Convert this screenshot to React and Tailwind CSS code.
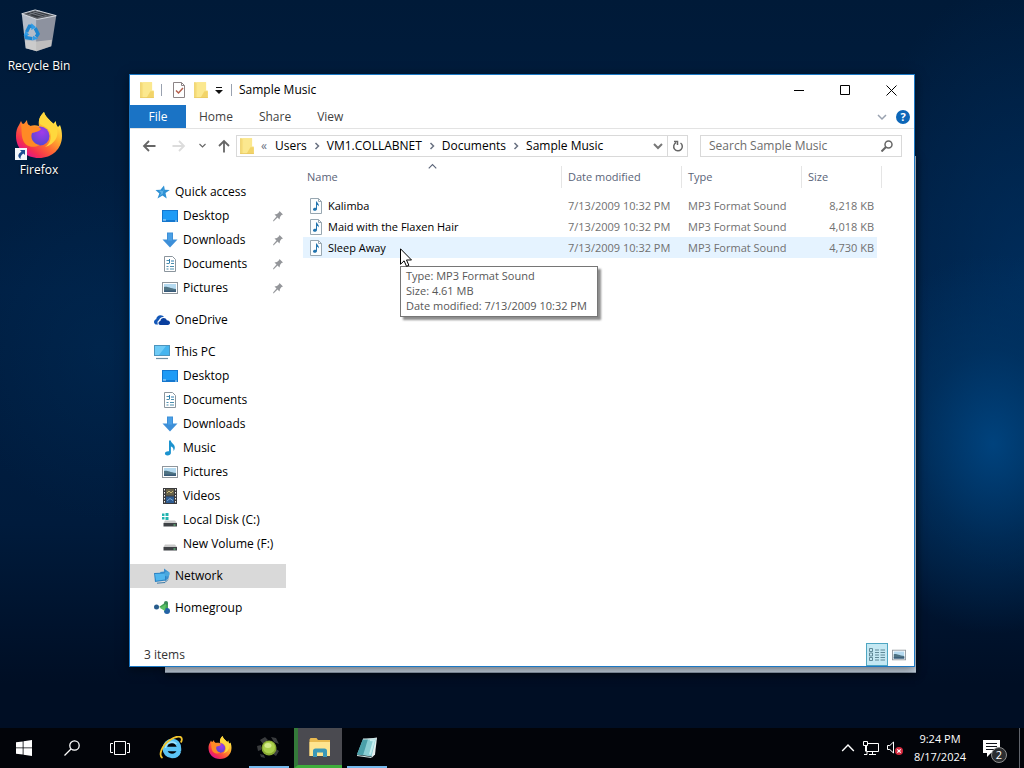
import React, { useId } from 'react';

const FolderIcon = ({ className = 'w-4 h-4' }) => (
    <svg className={className} viewBox="0 0 16 16" aria-hidden="true">
        <path d="M2 1h10.500v7.500H14V15H2z" fill="#f8e07f"/>
        <path d="M4.500 1h8v8l-2 5.500h-6z" fill="#fbe88f"/>
        <path d="M11 9h3v6H7.500z" fill="#f2d469"/>
        <path d="M2.500 1v14" stroke="#ecd06a"/>
        <path d="M2 14.700h12" stroke="#e6c75f" strokeWidth=".6"/>
    </svg>
);

const PropertiesIcon = () => (
    <svg className="w-4 h-4" viewBox="0 0 16 16" fill="none" aria-hidden="true">
        <path d="M2.500.5h8l3 3v12h-11z" fill="#fff" stroke="#8c8486"/>
        <path d="M10.500.5v3h3" stroke="#8c8486"/>
        <path d="M5 8.500l2.500 2.500L12 6" stroke="#b5604d" strokeWidth="1.500"/>
    </svg>
);

const DesktopIcon = () => (
    <svg className="w-4 h-4" viewBox="0 0 16 16" aria-hidden="true">
        <rect x="0" y="2" width="16" height="12" fill="#1377cf"/>
        <rect x="1" y="3" width="14" height="9" fill="#1e9bf6"/>
        <path d="M1 12h3M13 13h2" stroke="#bfe2fb"/>
    </svg>
);

const DownloadIcon = () => (
    <svg className="w-4 h-4" viewBox="0 0 16 16" aria-hidden="true">
        <path d="M5 .5h6v7h4.500L8 15.500.5 7.500H5z" fill="#3d8fd8"/>
        <path d="M6 1.500h4v7H6z" fill="#4ba0e6"/>
    </svg>
);

const DocumentIcon = () => (
    <svg className="w-4 h-4" viewBox="0 0 16 16" fill="none" aria-hidden="true">
        <path d="M2.500.5h8l3 3v12h-11z" fill="#fff" stroke="#8b959d"/>
        <path d="M4.500 4.500h3M4.500 7.500h3M9 7.500h3M4.500 10.500h2M8 10.500h4M4.500 13h2M8 13h4" stroke="#4d8fae"/>
        <path d="M7.500 3v4M9 5h3" stroke="#2c7cae"/>
    </svg>
);

const PictureIcon = ({ className = 'w-4 h-4' }) => (
    <svg className={className} viewBox="0 0 16 16" aria-hidden="true">
        <rect x=".5" y="2.500" width="15" height="11" fill="#fff" stroke="#8f969c"/>
        <rect x="2" y="4" width="12" height="8" fill="#b5daf0"/>
        <path d="M2 7c3-1 5 1 12 2v3H2z" fill="#4f7383"/>
        <path d="M2 10.500h12V12H2z" fill="#385a78"/>
    </svg>
);

const StarIcon = () => (
    <svg className="w-4 h-4" viewBox="0 0 16 16" aria-hidden="true">
        <path d="M10 1.500l.8 4.200 5 .3-4.300 3 1.200 5.500L8.500 11.500 3.500 14.500l1.800-5L1.500 6l5-.2z" fill="#2f91d4"/>
        <path d="M9.500 3.500l.2 3.500-5-.4 2.500 2.400L5.500 12 9 9.500z" fill="#5fb2e8"/>
    </svg>
);

const OneDriveIcon = () => (
    <svg className="w-4 h-4" viewBox="0 0 16 16" aria-hidden="true">
        <path d="M4 12.500H2.800C1 12.500 0 11.300 0 9.900 0 8.600 1 7.500 2.200 7.300 2.300 5 4.200 3.200 6.500 3.200c1.700 0 3 .8 3.700 2-2.800-.5-4.700 1-5.200 3-1.700.4-2 2.700-1 4.300z" fill="#1458b8"/>
        <path d="M6.300 13C5 13 4.500 12 4.500 11c0-1.200.8-2 1.900-2.100C6.500 7.200 8 6 9.600 6c1.500 0 2.700.8 3.200 2.200 1.800 0 3.200 1 3.200 2.600 0 1.300-.9 2.200-2.200 2.200z" fill="#0a3f9e"/>
    </svg>
);

const ComputerIcon = () => (
    <svg className="w-4 h-4" viewBox="0 0 16 16" aria-hidden="true">
        <rect x="0" y="1" width="16" height="11" fill="#4c94bd"/>
        <rect x="1" y="2" width="14" height="9" fill="#45b5ef"/>
        <path d="M1 2h11L5 11H1z" fill="#6fcbf6"/>
        <path d="M2 14.500h12" stroke="#6d8fa3" strokeWidth="1.200"/>
    </svg>
);

const MusicIcon = () => (
    <svg className="w-4 h-4" viewBox="0 0 16 16" aria-hidden="true">
        <path d="M7 .5h1.800c.2 2.500 4 3.500 4 7 0 1.500-.5 2.500-1.300 3.500.3-2.500-.8-4-2.600-4.500V13c0 1.500-1.500 2.500-3.300 2.500S2.500 14.500 3 13c.4-1.300 2.300-2.200 4-1.700z" fill="#1c93cf"/>
    </svg>
);

const VideoIcon = () => (
    <svg className="w-4 h-4" viewBox="0 0 16 16" aria-hidden="true">
        <rect x="1" y="0" width="14" height="16" fill="#3a3a3c"/>
        <rect x="4" y="1" width="8" height="6.500" fill="#67624a"/>
        <rect x="4" y="8.500" width="8" height="6.500" fill="#2f5c91"/>
        <path d="M5 5l2-2 2 2 2-2" stroke="#c9b878" fill="none"/>
        <path d="M5 13l3-2.500 3 2" stroke="#7fa9cf" fill="none"/>
        <path d="M2.500 1v15M13.500 1v15" stroke="#f3f3f3" strokeDasharray="1.500 1.500"/>
    </svg>
);

const DriveIcon = ({ system }) => (
    <svg className="w-4 h-4" viewBox="0 0 16 16" aria-hidden="true">
        <path d="M3 8.500h10l2 2.500H1.500z" fill="#c9c9c9"/>
        <rect x="1.500" y="11" width="13.500" height="3.500" fill="#3f4246"/>
        <path d="M11.500 13h2" stroke="#6fe08c"/>
        {system && <path d="M0 1.500h2.500V4H0zM3.500 1h3v3h-3zM0 5h2.500v2.500H0zM3.500 5h3v3h-3z" fill="#22b3b0"/>}
    </svg>
);

const NetworkIcon = () => (
    <svg className="w-4 h-4" viewBox="0 0 16 16" aria-hidden="true">
        <path d="M6 4l4-.5V.5l5.500 4-1 6L11 13z" fill="#3c8fcd"/>
        <path d="M0 5l12-.5v8L1 14z" fill="#2b83c4"/>
        <path d="M1 6l10-.5v6L2 12.800z" fill="#50b6ee"/>
        <path d="M3 15.200l8-.7 3-3" stroke="#3d7ba8" fill="none"/>
        <circle cx="13" cy="6" r="2.500" fill="#4aa7dd"/>
    </svg>
);

const HomegroupIcon = () => (
    <svg className="w-4 h-4" viewBox="0 0 16 16" aria-hidden="true">
        <path d="M5 7l7-5 2 1v8z" fill="#42a455"/>
        <circle cx="2.500" cy="7" r="2.500" fill="#285c8d"/>
        <circle cx="12" cy="3" r="2" fill="#3a8a58"/>
        <circle cx="13" cy="11" r="3" fill="#2463a5"/>
        <path d="M6 8l6-4-1 7z" fill="#5fc468"/>
    </svg>
);

const SoundFileIcon = () => (
    <svg className="w-4 h-4 shrink-0" viewBox="0 0 16 16" aria-hidden="true">
        <path d="M2.500.5h8l3 3v12h-11z" fill="#fbfdfe" stroke="#98a7b1"/>
        <path d="M10.500.5v3h3" fill="none" stroke="#98a7b1"/>
        <path d="M8 3.500h1c0 1.500 2.200 2 2 5-.5-1-1.200-1.500-2-1.500v4c0 1-1 1.800-2.200 1.800s-2-.8-1.800-1.600c.2-1 1.600-1.700 3-1.300z" fill="#2374ae"/>
    </svg>
);

const PinIcon = () => (
    <svg className="w-3 h-3" viewBox="0 0 12 12" aria-hidden="true">
        <path d="M7.500 1L11 4.500 9.500 5 8 7l-.5 2.500-2-2L2 11l-1 .5.300-1.300L4.500 6.500l-2-2L5 4l2-1.800z" fill="#94969a"/>
    </svg>
);

const Chevron = ({ d, className = 'w-3 h-3', width = 1.5 }) => (
    <svg className={className} viewBox="0 0 12 12" fill="none" stroke="currentColor" strokeWidth={width} aria-hidden="true">
        <path d={d}/>
    </svg>
);

const DOWN = 'M2 4l4 4 4-4';
const RIGHT = 'M4.500 3l3 3-3 3';
const UP = 'M1 8.500L6 3.500l5 5';

const FirefoxIcon = ({ className }) => {
    const id = useId();
    return (
        <svg className={className} viewBox="0 0 48 48" aria-hidden="true">
            <defs>
                <linearGradient id={`${id}body`} x1="0.850" y1="0.100" x2="0.200" y2="0.900">
                    <stop offset="0" stopColor="#fff44f"/>
                    <stop offset="0.350" stopColor="#ffb02e"/>
                    <stop offset="0.600" stopColor="#ff6a33"/>
                    <stop offset="0.850" stopColor="#f5304f"/>
                    <stop offset="1" stopColor="#e31587"/>
                </linearGradient>
                <radialGradient id={`${id}globe`} cx="0.600" cy="0.300" r="0.800">
                    <stop offset="0" stopColor="#a23bea"/>
                    <stop offset="1" stopColor="#4f48d0"/>
                </radialGradient>
            </defs>
            <path d="M29 0c1 5 6 8 9 12l3-3c-.2 3 .7 4 2 6l2-2c1.500 4 2 7 2 11 0 13-10 22-23 22S1 37 1 24c0-5 1-8 3-11l2-4 2 4 4-5c0 3 1 5 3 6 3-1 6-1 9 0-1-6 1-10 5-14z" fill={`url(#${id}body)`}/>
            <circle cx="25" cy="24" r="9.500" fill={`url(#${id}globe)`}/>
            <path d="M29 0c-4 4-6 8-4 12 3 2 8 3 10 8 2 6 0 12-5 15 10-3 14-11 12-18-2-6-11-10-13-17z" fill="#ffd83d"/>
            <path d="M6 12c4-1 8 1 11 3 4-1 7-1 9 2-2 3-6 3-9 4-2 5 1 11 8 12-8 4-15 1-17-5-2-5-1-11-2-16z" fill="#ff8a25"/>
        </svg>
    );
};

const RecycleBinIcon = ({ className }) => (
    <svg className={className} viewBox="4 0 48 48" aria-hidden="true">
        <path d="M10 6l17 3-1 36-12-3z" fill="#b4bcc8"/>
        <path d="M25 9l21-1-5 32-16 5z" fill="#8d929f"/>
        <path d="M10 6l14-4 22 6-20 4z" fill="#5d6168"/>
        <path d="M15 6l9-3 15 4-13 3z" fill="#34383e"/>
        <path d="M18 5l14 4M22 4l14 4M17 7l12-4" stroke="#777c85"/>
        <path d="M10 6l14-4 22 6-20 4z" fill="none" stroke="#d8dde3"/>
        <path d="M13.500 34l12 1v10l-11-3zM25.500 35l16-2-1 7-15 5z" fill="#d4d1cc" opacity=".7"/>
        <g fill="none" stroke="#1e86d0" strokeWidth="3.500">
            <path d="M15 25l3-6 3 0"/>
            <path d="M24 21l3 6-2 3"/>
            <path d="M21 32l-6-1-1-3"/>
        </g>
        <path d="M20 16l5 4-5 3zM27 32l-6 2 1-5zM12 29l2-5 4 4z" fill="#2f9be6"/>
    </svg>
);

const quickAccess = [
    { name: 'Desktop', Icon: DesktopIcon },
    { name: 'Downloads', Icon: DownloadIcon },
    { name: 'Documents', Icon: DocumentIcon },
    { name: 'Pictures', Icon: PictureIcon },
];

const thisPc = [
    { name: 'Desktop', Icon: DesktopIcon },
    { name: 'Documents', Icon: DocumentIcon },
    { name: 'Downloads', Icon: DownloadIcon },
    { name: 'Music', Icon: MusicIcon },
    { name: 'Pictures', Icon: PictureIcon },
    { name: 'Videos', Icon: VideoIcon },
    { name: 'Local Disk (C:)', Icon: () => <DriveIcon system/> },
    { name: 'New Volume (F:)', Icon: DriveIcon },
];

const files = [
    { name: 'Kalimba', size: '8,218 KB' },
    { name: 'Maid with the Flaxen Hair', size: '4,018 KB' },
    { name: 'Sleep Away', size: '4,730 KB', hovered: true },
];

const NavItem = ({ name, Icon, child, pinned, selected }) => (
    <li>
        <a href="#" className={`flex items-center h-6 gap-[5px] ${child ? 'pl-8' : 'pl-6'} ${selected ? 'bg-[#d9d9d9]' : ''}`}>
            <Icon/>
            <span className="flex-1 whitespace-nowrap">{name}</span>
            {pinned && <span className="pr-[2px]"><PinIcon/></span>}
        </a>
    </li>
);

const Sidebar = () => (
    <nav className="w-[156px] shrink-0 pt-[18px] space-y-2 text-black">
        <ul>
            <NavItem name="Quick access" Icon={StarIcon}/>
            {quickAccess.map((item) => <NavItem key={item.name} {...item} child pinned/>)}
        </ul>
        <ul><NavItem name="OneDrive" Icon={OneDriveIcon}/></ul>
        <ul>
            <NavItem name="This PC" Icon={ComputerIcon}/>
            {thisPc.map((item) => <NavItem key={item.name} {...item} child/>)}
        </ul>
        <ul><NavItem name="Network" Icon={NetworkIcon} selected/></ul>
        <ul><NavItem name="Homegroup" Icon={HomegroupIcon}/></ul>
    </nav>
);

const TitleBar = () => (
    <div className="flex items-center h-[30px] shrink-0">
        <div className="flex items-center pl-2 text-black">
            <FolderIcon className="w-[18px] h-[18px]"/>
            <span className="w-px h-3 bg-gray-400 ml-[5px] mr-[9px]"/>
            <button aria-label="Properties"><PropertiesIcon/></button>
            <button aria-label="New folder" className="ml-[5px]"><FolderIcon className="w-[18px] h-[18px]"/></button>
            <button aria-label="Customize" className="ml-[5px]">
                <svg className="w-2 h-2" viewBox="0 0 8 8"><path d="M1 1.500h6" stroke="#111"/><path d="M0 4h8L4 8z" fill="#111"/></svg>
            </button>
            <span className="w-px h-3 bg-gray-400 ml-2 mr-[7px]"/>
            <h1>Sample Music</h1>
        </div>
        <div className="flex ml-auto text-black">
            <button aria-label="Minimize" className="w-[46px] h-[29px] flex items-center justify-center">
                <svg className="w-[10px] h-[10px]" viewBox="0 0 10 10"><path d="M0 5.500h10" stroke="currentColor"/></svg>
            </button>
            <button aria-label="Maximize" className="w-[46px] h-[29px] flex items-center justify-center">
                <svg className="w-[10px] h-[10px]" viewBox="0 0 10 10"><path d="M.5.5h9v9h-9z" fill="none" stroke="currentColor"/></svg>
            </button>
            <button aria-label="Close" className="w-[46px] h-[29px] flex items-center justify-center">
                <svg className="w-[11px] h-[11px]" viewBox="0 0 11 11"><path d="M.5.5l10 10M10.500.5l-10 10" stroke="currentColor"/></svg>
            </button>
        </div>
    </div>
);

const Ribbon = () => (
    <div className="flex items-center h-6 shrink-0 border-b border-[#e3e3e3] text-[#3f3f3f]">
        <button className="w-14 h-full bg-[#1a73c5] text-white">File</button>
        <button className="px-[13px]">Home</button>
        <button className="px-[13px]">Share</button>
        <button className="px-[13px]">View</button>
        <div className="flex items-center gap-2 ml-auto pr-1">
            <button aria-label="Expand ribbon" className="text-gray-400"><Chevron d={DOWN}/></button>
            <button className="w-[14px] h-[14px] rounded-full bg-[#0c66b8] text-white text-[11px] leading-[14px] font-bold">?</button>
        </div>
    </div>
);

const Crumb = ({ children, last }) => (
    <>
        <a href="#" className="whitespace-nowrap">{children}</a>
        {!last && <Chevron d={RIGHT} className="w-3 h-3 mx-1 text-gray-500"/>}
    </>
);

const AddressBar = () => (
    <div className="flex items-center h-[33px] shrink-0 pr-3">
        <div className="flex items-center w-[106px] shrink-0 text-[#666]">
            <button aria-label="Back" className="ml-3">
                <svg className="w-[14px] h-[14px]" viewBox="0 0 14 14" fill="none" stroke="currentColor" strokeWidth="1.800"><path d="M13.500 7H2M7 2L2 7l5 5"/></svg>
            </button>
            <button aria-label="Forward" className="ml-4 text-[#dcdcdc]">
                <svg className="w-[14px] h-[14px]" viewBox="0 0 14 14" fill="none" stroke="currentColor" strokeWidth="1.800"><path d="M.5 7H12M7 2l5 5-5 5"/></svg>
            </button>
            <button aria-label="Recent" className="ml-3"><Chevron d={DOWN} className="w-[9px] h-[9px]"/></button>
            <button aria-label="Up" className="ml-[10px]">
                <svg className="w-[14px] h-[14px]" viewBox="0 0 14 14" fill="none" stroke="currentColor" strokeWidth="1.800"><path d="M7 13.500V2M2 7l5-5 5 5"/></svg>
            </button>
        </div>
        <nav className="flex items-center flex-1 min-w-0 h-[22px] border border-[#d9d9d9] text-black">
            <FolderIcon className="w-[18px] h-[18px] ml-px"/>
            <span className="text-gray-500 ml-[5px] mr-2">«</span>
            <Crumb>Users</Crumb>
            <Crumb>VM1.COLLABNET</Crumb>
            <Crumb>Documents</Crumb>
            <Crumb last>Sample Music</Crumb>
            <button aria-label="Previous locations" className="ml-auto mr-[3px] text-[#777]"><Chevron d={DOWN} width={2}/></button>
            <button aria-label="Refresh" className="flex items-center justify-center w-5 h-full border-l border-[#d9d9d9] text-[#666]">
                <svg className="w-3 h-3" viewBox="0 0 12 12" fill="none" stroke="currentColor" strokeWidth="1.500">
                    <path d="M8.500 3A4.300 4.300 0 1 1 4 2.700M2 1.500h3.500V5"/>
                </svg>
            </button>
        </nav>
        <label className="flex items-center w-[202px] h-[22px] ml-3 px-2 border border-[#d9d9d9]">
            <input type="text" aria-label="Search Sample Music" placeholder="Search Sample Music"
                   className="flex-1 min-w-0 outline-none placeholder:text-[#6d6d6d]"/>
            <svg className="w-3 h-3 text-[#666]" viewBox="0 0 12 12" fill="none" stroke="currentColor" strokeWidth="1.500">
                <circle cx="7.500" cy="4.500" r="3.500"/>
                <path d="M5 7L.5 11.500" strokeWidth="2"/>
            </svg>
        </label>
    </div>
);

const HeaderCell = ({ children, className, first, sorted }) => (
    <th className={`relative h-[33px] p-0 align-top font-normal ${className}`}>
        {sorted && <Chevron d={UP} width={1.5} className="absolute top-0 left-1/2 w-[9px] h-[9px] -ml-1"/>}
        <div className={`mt-1 h-[22px] leading-[22px] ${first ? 'pl-1' : 'border-l border-[#e5e5e5] pl-[6px]'}`}>
            {children}
        </div>
    </th>
);

const FileTable = () => (
    <table className="ml-[17px] self-start table-fixed w-[579px] border-collapse text-left text-[11px] text-[#707070]">
        <thead className="text-[#5a6478]">
            <tr>
                <HeaderCell className="w-[258px]" first sorted>Name</HeaderCell>
                <HeaderCell className="w-[120px]">Date modified</HeaderCell>
                <HeaderCell className="w-[120px]">Type</HeaderCell>
                <HeaderCell className="w-[76px]">Size</HeaderCell>
                <td className="align-top p-0"><div className="mt-1 h-[22px] border-r border-[#e5e5e5]"/></td>
            </tr>
        </thead>
        <tbody>
            {files.map((file) => {
                const bg = file.hovered ? 'bg-[#e5f3ff]' : '';
                return (
                    <tr key={file.name} className="h-[21px] whitespace-nowrap">
                        <td className={`p-0 pl-[5px] text-black ${bg}`}>
                            <span className="flex items-center gap-1"><SoundFileIcon/>{file.name}</span>
                        </td>
                        <td className={`p-0 pl-[7px] ${bg}`}>7/13/2009 10:32 PM</td>
                        <td className={`p-0 pl-[7px] ${bg}`}>MP3 Format Sound</td>
                        <td className={`p-0 pr-[3px] text-right ${bg}`}>{file.size}</td>
                        <td className="p-0"/>
                    </tr>
                );
            })}
        </tbody>
    </table>
);

const StatusBar = () => (
    <div className="flex items-center h-[23px] shrink-0 pl-[14px] pr-1 text-[#333]">
        <span>3 items</span>
        <button aria-label="Details view" className="flex items-center justify-center ml-auto w-[22px] h-[23px] bg-[#c4e8f3] border border-[#4fa6c2]">
            <svg className="w-4 h-[14px]" viewBox="0 0 16 14" fill="none" stroke="#567e8c">
                <path d="M.5.5h3v3h-3zM.5 5h3v3h-3zM.5 9.500h3v3h-3zM6 2h4M11.500 2H16M6 4.500h4M11.500 4.500H16M6 7h4M11.500 7H16M6 9.500h4M11.500 9.500H16M6 12h4M11.500 12H16" strokeWidth=".9"/>
            </svg>
        </button>
        <button aria-label="Large icons view" className="flex items-center justify-center w-[22px]">
            <PictureIcon className="w-[14px] h-[14px]"/>
        </button>
    </div>
);

const ExplorerWindow = () => (
    <main className="absolute left-[129px] right-[109px] top-[74px] bottom-[61px] flex flex-col bg-white border border-[#1b78c4] shadow-[0_2px_10px_rgba(0,0,0,0.5)]">
        <TitleBar/>
        <Ribbon/>
        <AddressBar/>
        <div className="flex flex-1 min-h-0">
            <Sidebar/>
            <FileTable/>
        </div>
        <StatusBar/>
        <svg className="absolute left-[270px] top-[173px] w-3 h-[19px] z-10" viewBox="0 0 12 19" aria-hidden="true">
            <path d="M.5.800v15.500l3.600-3.500 2.400 5.500 2.400-1-2.400-5.300h5z" fill="#fff" stroke="#000"/>
        </svg>
        <div role="tooltip" className="absolute left-[270px] top-[191px] border border-[#767676] bg-white pl-[5px] pr-[10px] pt-px pb-[3px] text-[11px] leading-[15px] whitespace-nowrap text-[#575757] shadow-[3px_3px_2px_rgba(0,0,0,0.45)]">
            <p>Type: MP3 Format Sound</p>
            <p>Size: 4.61 MB</p>
            <p>Date modified: 7/13/2009 10:32 PM</p>
        </div>
    </main>
);

const DesktopShortcut = ({ name, children }) => (
    <a href="#" className="flex flex-col items-center text-white">
        <span className="relative h-12">{children}</span>
        <span className="h-5 leading-5 whitespace-nowrap [text-shadow:0_1px_2px_#000]">{name}</span>
    </a>
);

const TaskButton = ({ label, children, className = '' }) => (
    <button aria-label={label} className={`flex items-center justify-center w-12 h-full ${className}`}>
        {children}
    </button>
);

const Taskbar = () => (
    <footer className="relative flex h-10 shrink-0 bg-[#020409] text-white">
        <TaskButton label="Start">
            <svg className="w-4 h-4" viewBox="0 0 16 16" fill="currentColor"><path d="M0 2.300L6.700 1.400v6.100H0zM7.500 1.300L16 0v7.500H7.500zM0 8.300h6.700v6.300L0 13.700zM7.500 8.300H16V16l-8.500-1.200z"/></svg>
        </TaskButton>
        <TaskButton label="Search">
            <svg className="w-4 h-4" viewBox="0 0 16 16" fill="none" stroke="currentColor" strokeWidth="1.300"><circle cx="10.500" cy="5.500" r="4.700"/><path d="M7 9L.5 15.500"/></svg>
        </TaskButton>
        <TaskButton label="Task view">
            <svg className="w-5 h-4" viewBox="0 0 20 16" fill="none" stroke="currentColor"><path d="M4.500 1.500h11v13h-11zM3 3.500H.5v9H3M17 3.500h2.500v9H17"/></svg>
        </TaskButton>
        <div className="flex gap-px ml-[3px]">
            <TaskButton label="Internet Explorer">
                <svg className="w-6 h-6" viewBox="0 0 24 24" fill="none">
                    <path d="M20 15c-1 3.200-3.700 5-7 5-4.400 0-7.200-3.300-7.200-7.500S8.800 5 13 5c4.600 0 7.200 3.300 7 8H8" stroke="#5cc5f6" strokeWidth="4.500"/>
                    <path d="M6.500 12a6.500 6.500 0 0 1 11-4" stroke="#a2e6ff" strokeWidth="1.500"/>
                    <path d="M3.500 22C-1 19 3 9.500 11 4c5-3.500 10-4.500 11.500-2 .8 1.500.2 3-.7 4.500" stroke="#f2c52e" strokeWidth="1.800"/>
                </svg>
            </TaskButton>
            <TaskButton label="Firefox"><FirefoxIcon className="w-6 h-6"/></TaskButton>
            <TaskButton label="Green ball" className="relative">
                <svg className="w-6 h-6" viewBox="0 0 24 24">
                    <path d="M3 4l5-3 3 3-5 4zM14 1l5 1 3 6-5-2zM0 10l4-1v5l-3 1zM3 18l4 1 1 3-4-1zM19 13l3 2-3 5-3-2z" fill="#3a3c3e"/>
                    <circle cx="12" cy="12" r="7.500" fill="#87a832"/>
                    <circle cx="12" cy="11.500" r="6" fill="#abd04d"/>
                    <ellipse cx="11" cy="9.500" rx="3.500" ry="2.500" fill="#d3eb8b"/>
                </svg>
                <span className="absolute bottom-0 inset-x-1 h-[2px] bg-[#76b9ed]"/>
            </TaskButton>
            <TaskButton label="File Explorer" className="bg-[#4a4a50] border-b-[3px] border-l-4 border-b-[#3fae3b] border-l-[#347a3a]">
                <svg className="w-6 h-6" viewBox="0 0 24 24">
                    <path d="M1.500 4.500l1-1.500h6l1.500 2h12v16h-20.500z" fill="#e9ba50"/>
                    <path d="M1.500 7h20.500v14H1.500z" fill="#ffe48f"/>
                    <path d="M5 22v-6q0-2.500 2.500-2.500h9Q19 13.500 19 16v6h-4v-4.500H9V22z" fill="#3c98b7"/>
                </svg>
            </TaskButton>
            <TaskButton label="Notepad" className="relative">
                <svg className="w-6 h-6" viewBox="0 0 24 24">
                    <path d="M8 3.500l14-2-2 17-3 3z" fill="#e4eeee"/>
                    <path d="M8 3l13-.5-4.500 18L2 18.500z" fill="#8acdd3"/>
                    <path d="M8 3l5 0-5 16.300-6-.8z" fill="#4a9fa9"/>
                    <path d="M15 4l4 .5-4 14" stroke="#c4edef" fill="none" strokeWidth="2"/>
                    <path d="M8 3h13.500M2 19.500l14.500 2" stroke="#d6e7e7" strokeWidth="1.200"/>
                </svg>
                <span className="absolute bottom-0 inset-x-1 h-[2px] bg-[#76b9ed]"/>
            </TaskButton>
        </div>
        <div className="flex items-center ml-auto">
            <button aria-label="Show hidden icons"><Chevron d={UP} className="w-[14px] h-[14px]" width={1.2}/></button>
            <svg className="w-4 h-4 ml-2" viewBox="0 0 16 16" fill="none" stroke="currentColor">
                <path d="M5 3.500h10.500v8H3.500V6M9.500 11.500V14M6 14.500h7M.5 1.500h4v4h-4zM2.500 5.500v6M1 14.500h3v-3"/>
            </svg>
            <svg className="w-4 h-4 ml-2" viewBox="0 0 16 16" fill="none">
                <path d="M.5 5.500h2.300L6.500 2v11L2.800 9.500H.5z" stroke="#fff"/>
                <circle cx="12" cy="11" r="4" fill="#d62b3f"/>
                <path d="M10.300 9.300l3.400 3.400M13.700 9.300l-3.400 3.400" stroke="#fff" strokeWidth="1.200"/>
            </svg>
            <time className="w-[74px] text-center text-[11px] leading-[18px]">9:24 PM<br/>8/17/2024</time>
            <button className="relative w-10 h-full ml-[2px]">
                <svg className="absolute left-1 top-3 w-[17px] h-[17px]" viewBox="0 0 17 17">
                    <path d="M0 0h17v13H8l-4 4v-4H0z" fill="#fff"/>
                    <path d="M3 3.500h11M3 6.500h11M3 9.500h8" stroke="#10131a"/>
                </svg>
                <span className="absolute left-3 top-[19px] w-4 h-4 rounded-full bg-[#2b2d30] border border-[#8e8e8e] text-[11px] leading-[14px]">2</span>
            </button>
            <span className="w-[5px] h-full border-l border-[#60646b]"/>
        </div>
    </footer>
);

const App = () => (
    <div className="flex flex-col min-h-screen overflow-hidden bg-[#000d22] text-[12px] leading-4 font-['Open_Sans','Noto_Sans',sans-serif]">
        <div className="relative flex-1 bg-[#001b3b] bg-[radial-gradient(ellipse_150px_190px_at_97%_61%,rgba(0,72,134,0.85)_0%,rgba(0,58,110,0.5)_50%,transparent_100%),radial-gradient(ellipse_180px_300px_at_100%_38%,rgba(0,52,104,0.6),transparent),radial-gradient(ellipse_140px_170px_at_10%_48%,rgba(0,46,90,0.4),transparent),linear-gradient(180deg,#001a38_0%,#002045_40%,#001b3c_72%,#000e24_94%)]">
            <div className="flex flex-col gap-9 w-[78px] pt-2">
                <DesktopShortcut name="Recycle Bin">
                    <RecycleBinIcon className="w-12 h-[46px]"/>
                </DesktopShortcut>
                <DesktopShortcut name="Firefox">
                    <FirefoxIcon className="w-12 h-12"/>
                    <svg className="absolute left-0 bottom-0 w-3 h-3" viewBox="0 0 12 12">
                        <path d="M0 0h12v12H0z" fill="#f4f7fb"/>
                        <path d="M5 2h5v5L8.300 5.500C6 7 5.500 8.500 5.500 11 2 8.500 3 5.500 6.500 3.700z" fill="#1e4e91"/>
                    </svg>
                </DesktopShortcut>
            </div>
            {/* second window, almost covered by the front one */}
            <div className="absolute left-[165px] right-[108px] top-[156px] bottom-[55px] bg-[#c3d0de] border-b border-[#8795a5] shadow-[0_2px_8px_rgba(0,0,0,0.5)]"/>
            <ExplorerWindow/>
        </div>
        <Taskbar/>
    </div>
);

export default App;
